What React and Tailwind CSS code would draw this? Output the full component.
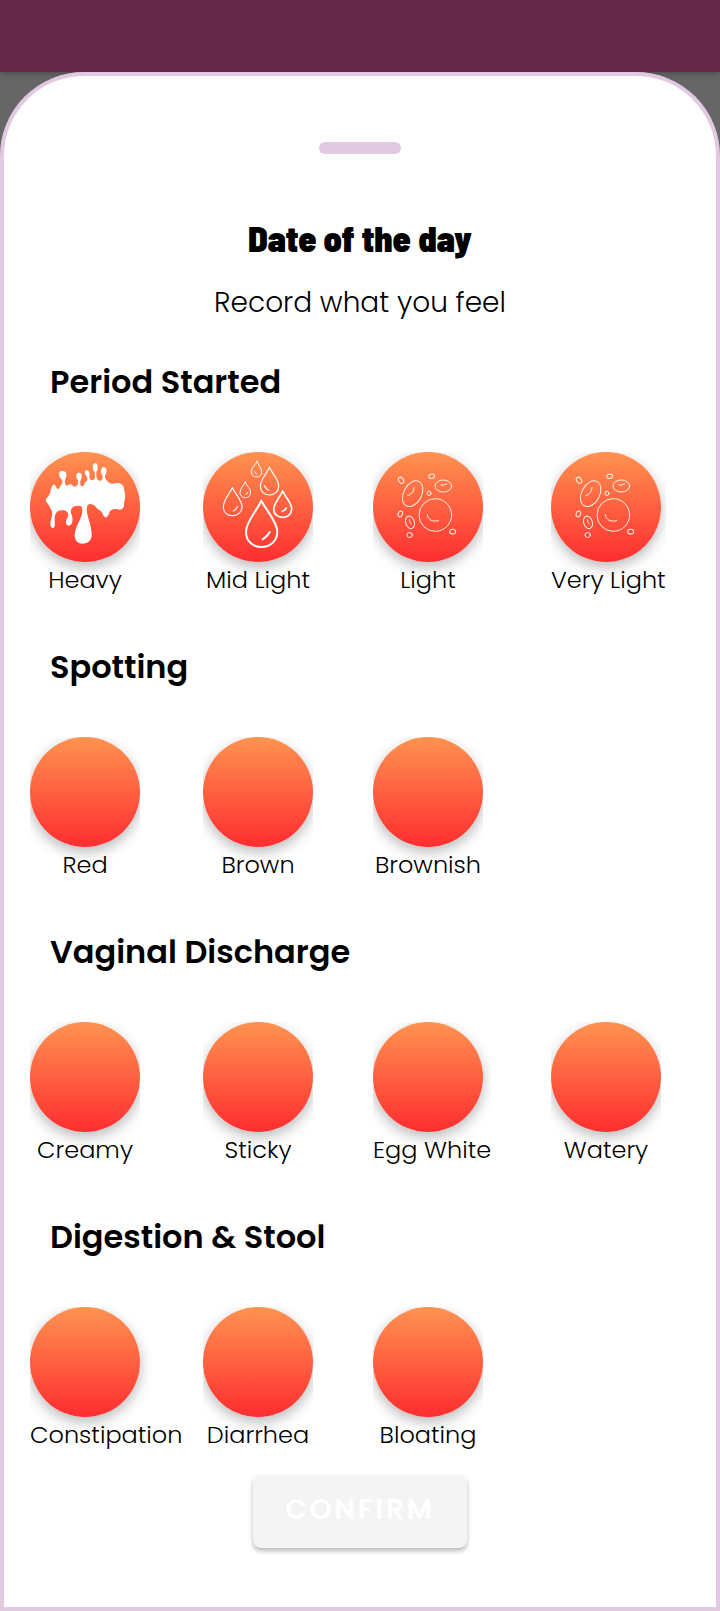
const circle =
  'block size-[110px] rounded-full bg-linear-to-b/srgb from-[#ff9350] to-[#ff2d30] shadow-[0_5px_14px_rgba(0,0,0,0.28)]';

function SplashIcon() {
  return (
    <svg viewBox="30 36 330 330" className="size-full" fill="#fff" aria-hidden="true">
      <path d="M77 182 C80 170 91 165 92 152 C94 141 99 132 104 134 C109 137 107 145 114 147 C120 146 119 139 125 133 C129 126 127 120 122 115 C115 107 115 94 125 93 C137 92 142 99 138 110 C136 118 133 123 137 133 C140 143 144 133 151 132 C157 133 159 142 166 140 C173 136 176 129 174 121 C166 112 167 99 177 98 C187 98 187 111 182 121 C179 129 181 141 187 139 C194 137 192 128 199 124 C205 118 202 112 198 106 C192 99 193 90 201 91 C210 93 209 104 208 111 C209 118 213 122 219 120 C227 118 224 109 225 99 C217 92 216 70 225 69 C235 69 235 88 229 96 C228 108 230 121 238 122 C247 123 249 115 247 107 C241 98 241 82 251 81 C263 83 260 99 255 108 C254 117 259 120 265 126 C272 135 284 129 294 129 C307 130 314 140 313 154 C318 168 314 180 312 190 C314 207 303 211 292 208 C282 205 274 207 268 217 C264 229 260 235 254 231 C246 223 247 212 237 210 C229 206 226 195 215 193 C207 190 200 195 200 208 C201 231 215 256 215 284 C216 301 202 311 188 311 C171 310 163 299 164 283 C166 257 187 237 187 211 C188 198 181 196 171 198 C157 197 151 207 153 219 C158 230 160 243 154 252 C149 260 138 257 138 248 C137 238 144 233 145 224 C143 212 134 211 124 211 C110 212 105 222 104 234 C103 246 107 261 100 264 C91 265 89 252 93 239 C96 228 98 216 94 209 C88 202 88 193 83 191 Z" />
    </svg>
  );
}

function DropsIcon() {
  return (
    <svg viewBox="39 36 330 330" className="size-full" fill="none" stroke="#fff" strokeLinejoin="round" strokeLinecap="round" aria-hidden="true">
      <path strokeWidth="6" d="M214 182 C201 212 168 245 168 275 C168 305 190 321 214 321 C241 321 262 302 262 275 C262 246 230 213 214 182 Z M218 298 C228 292 234 286 239 276" />
      <path strokeWidth="5" d="M278 153 C270 172 251 190 251 207 C251 223 263 232 278 232 C293 232 305 222 305 207 C305 189 286 172 278 153 Z M277 214 Q285 211 289 204" />
      <path strokeWidth="3.5" d="M238 82 C231 101 211 119 211 138 C211 155 223 165 239 165 C255 165 266 153 266 138 C266 119 247 101 238 82 Z M223 137 Q228 147 236 151" />
      <path strokeWidth="3.5" d="M127 143 C118 162 100 181 100 200 C100 217 111 227 128 227 C144 227 156 216 156 200 C156 181 137 163 127 143 Z M130 213 Q139 209 142 200" />
      <path strokeWidth="3" d="M201 64 C197 74 184 83 184 95 C184 105 191 111 200 111 C210 111 215 104 215 95 C215 84 204 75 201 64 Z M193 95 Q195 100 200 102" />
      <path strokeWidth="3" d="M166 126 C161 137 150 146 150 157 C150 167 157 173 166 173 C175 173 182 167 182 157 C182 147 170 138 166 126 Z M167 163 Q173 161 174 156" />
    </svg>
  );
}

function CellsIcon() {
  return (
    <svg viewBox="39 36 330 330" className="size-full" fill="none" stroke="#fff3ea" strokeWidth="3" strokeLinecap="round" aria-hidden="true">
      <circle cx="226" cy="225" r="49" />
      <path d="M202 224 C203 240 219 247 236 242" />
      <ellipse cx="158" cy="161" rx="27" ry="41" transform="rotate(28 158 161)" />
      <path d="M162 143 C160 157 154 164 143 167" />
      <ellipse cx="250" cy="138" rx="25" ry="18" />
      <path d="M243 135 Q252 137 260 132" />
      <ellipse cx="150" cy="247" rx="13" ry="19" transform="rotate(-18 150 247)" />
      <path d="M148 239 Q149 249 154 252" />
      <ellipse cx="123" cy="121" rx="7" ry="10" transform="rotate(-32 123 121)" />
      <ellipse cx="215" cy="109" rx="9" ry="6.5" transform="rotate(-12 215 109)" />
      <ellipse cx="207" cy="160" rx="6" ry="6.5" />
      <ellipse cx="121" cy="222" rx="6.5" ry="9" transform="rotate(22 121 222)" />
      <ellipse cx="149" cy="285" rx="8" ry="7.5" />
      <ellipse cx="278" cy="275" rx="9" ry="7" transform="rotate(8 278 275)" />
    </svg>
  );
}

const sections = [
  {
    title: 'Period Started',
    items: [
      { label: 'Heavy', Icon: SplashIcon },
      { label: 'Mid Light', Icon: DropsIcon },
      { label: 'Light', Icon: CellsIcon },
      { label: 'Very Light', Icon: CellsIcon },
    ],
  },
  { title: 'Spotting', items: [{ label: 'Red' }, { label: 'Brown' }, { label: 'Brownish' }] },
  {
    title: 'Vaginal Discharge',
    items: [{ label: 'Creamy' }, { label: 'Sticky' }, { label: 'Egg White' }, { label: 'Watery' }],
  },
  {
    title: 'Digestion & Stool',
    items: [{ label: 'Constipation' }, { label: 'Diarrhea' }, { label: 'Bloating' }],
  },
];

function Option({ label, Icon }) {
  return (
    <button type="button" className="flex min-w-[110px] cursor-pointer flex-col items-start overflow-hidden justify-self-start">
      <span className={circle}>{Icon && <Icon />}</span>
      <span className="self-center text-2xl leading-9 font-light whitespace-nowrap">{label}</span>
    </button>
  );
}

export default function App() {
  return (
    <div className="flex min-h-screen flex-col bg-[#666] font-['Poppins','Inter',sans-serif] text-black">
      <header className="h-[72px] bg-[#662a48] shadow-[0_1px_6px_rgba(0,0,0,0.3)]" />
      <main className="relative flex flex-1 flex-col rounded-t-[84px] border-4 border-[#e2c9e2] bg-white pt-[66px] pb-14">
        <div className="h-3 w-[82px] self-center rounded-full bg-[#e2c9e2]" />
        <h1 className="mt-16 text-center font-['Barlow_Semi_Condensed','Barlow','Roboto',sans-serif] text-4xl leading-10 font-black">
          Date of the day
        </h1>
        <p className="mt-[25px] text-center text-[28px] leading-10 font-light">Record what you feel</p>
        <div className="mt-[35px] flex flex-col gap-[45px]">
          {sections.map(({ title, items }) => (
            <section key={title}>
              <h2 className="pl-[46px] text-[32px] leading-12 font-semibold">{title}</h2>
              <div className="mt-[46px] grid grid-cols-[173fr_170fr_178fr_139fr] px-[26px]">
                {items.map((item) => (
                  <Option key={item.label} {...item} />
                ))}
              </div>
            </section>
          ))}
        </div>
        <button
          type="button"
          className="mt-[22px] h-[73px] w-[214px] self-center rounded-lg bg-[#f4f4f4] pb-1 text-[28px] font-semibold tracking-widest text-white shadow-[0_3px_5px_rgba(0,0,0,0.28)]"
        >
          CONFIRM
        </button>
      </main>
    </div>
  );
}
